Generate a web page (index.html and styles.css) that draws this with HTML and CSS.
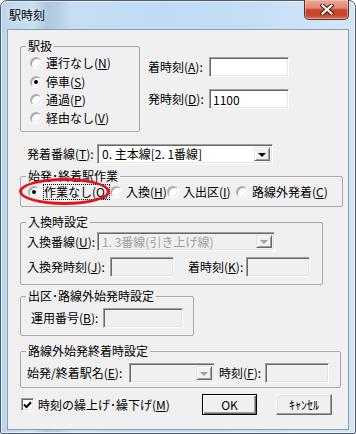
FILE: index.html
```html
<!DOCTYPE html>
<html lang="ja">
<head>
<meta charset="utf-8">
<title>駅時刻</title>
<link rel="stylesheet" href="styles.css">
</head>
<body>
<div class="window">
  <div class="titlebar">
    <span class="title">駅時刻</span>
    <div class="close">
      <svg width="14" height="11" viewBox="0 0 14 11"><path d="M2.5 1.5 L11.5 9.5 M11.5 1.5 L2.5 9.5" stroke="#3b1a14" stroke-width="4.2" stroke-linecap="square"/><path d="M2.5 1.5 L11.5 9.5 M11.5 1.5 L2.5 9.5" stroke="#fff" stroke-width="2.2" stroke-linecap="square"/></svg>
    </div>
  </div>
  <div class="client">
    <div class="top">
      <fieldset class="grp g-eki">
        <legend>駅扱</legend>
        <div class="radio r1"><span class="rb"></span>運行なし(<u>N</u>)</div>
        <div class="radio r2"><span class="rb on"></span>停車(<u>S</u>)</div>
        <div class="radio r3"><span class="rb"></span>通過(<u>P</u>)</div>
        <div class="radio r4"><span class="rb"></span>経由なし(<u>V</u>)</div>
      </fieldset>
      <div class="times">
        <span class="lbl">着時刻(<u>A</u>):</span><span class="edit"></span>
        <span class="lbl">発時刻(<u>D</u>):</span><span class="edit">1100</span>
      </div>
    </div>

    <div class="row r-track">
      <span class="lbl w70">発着番線(<u>T</u>):</span>
      <span class="combo c-track"><span class="ctext">0. 主本線[2. 1番線]</span><span class="drop"><span class="tri"></span></span></span>
    </div>

    <fieldset class="grp g-work">
      <legend>始発･終着駅作業</legend>
      <div class="work-row">
        <div class="radio"><span class="rb on"></span><span class="focus">作業なし(<u>O</u>)</span></div>
        <div class="radio"><span class="rb"></span>入換(<u>H</u>)</div>
        <div class="radio"><span class="rb"></span>入出区(<u>I</u>)</div>
        <div class="radio"><span class="rb"></span>路線外発着(<u>C</u>)</div>
      </div>
    </fieldset>

    <fieldset class="grp g-shunt">
      <legend>入換時設定</legend>
      <div class="row s-row1">
        <span class="lbl w70">入換番線(<u>U</u>):</span>
        <span class="combo dis c-shunt"><span class="ctext">1. 3番線(引き上げ線)</span><span class="drop"><span class="tri"></span></span></span>
      </div>
      <div class="row s-row2">
        <span class="lbl w83">入換発時刻(<u>J</u>):</span>
        <span class="edit dis w64"></span>
        <span class="lbl w58 gap14">着時刻(<u>K</u>):</span>
        <span class="edit dis w64"></span>
      </div>
    </fieldset>

    <fieldset class="grp g-out">
      <legend>出区･路線外始発時設定</legend>
      <div class="row o-row">
        <span class="lbl w72">運用番号(<u>B</u>):</span>
        <span class="edit dis w80"></span>
      </div>
    </fieldset>

    <fieldset class="grp g-ext">
      <legend>路線外始発終着時設定</legend>
      <div class="row e-row">
        <span class="lbl w102">始発/終着駅名(<u>E</u>):</span>
        <span class="combo dis c-ext"><span class="ctext"></span><span class="drop"><span class="tri"></span></span></span>
        <span class="lbl w46 gap4">時刻(<u>F</u>):</span>
        <span class="edit dis w64"></span>
      </div>
    </fieldset>

    <div class="bottom">
      <span class="chk"><svg width="9" height="8" viewBox="0 0 9 8"><path d="M1 3.5 L3.5 6 L8 1.2" stroke="#000" stroke-width="2" fill="none"/></svg></span>
      <span class="chk-lbl">時刻の繰上げ･繰下げ(<u>M</u>)</span>
      <span class="btn default">OK</span>
      <span class="btn cancel">ｷｬﾝｾﾙ</span>
    </div>

    <span class="ellipse"></span>
  </div>
</div>
</body>
</html>
```

FILE: styles.css
```css
* { box-sizing: border-box; }
html, body { margin: 0; padding: 0; }
body {
  width: 356px;
  height: 434px;
  overflow: hidden;
  background: #ffffff;
  font: 12px/14px "Noto Sans CJK JP", "Noto Sans", sans-serif;
  color: #000;
}
u { text-decoration: underline; text-underline-offset: 1px; }

.window {
  width: 356px;
  height: 434px;
  border: 1px solid #4b5f74;
  border-radius: 7px 7px 2px 2px;
  background: linear-gradient(90deg, #bcd5ec 0, #c8dff4 9%, #aec6de 13%, #b5cde5 16%, #c7def5 20%, #bfdbf6 45%, #c5def6 70%, #d3e6f8 100%);
  box-shadow: inset 0 0 0 1px rgba(255, 255, 255, 0.55);
  display: flex;
  flex-direction: column;
}

.titlebar {
  height: 28px;
  display: flex;
  align-items: flex-start;
  padding-left: 8px;
}
.title {
  margin-top: 7px;
  font-size: 12px;
  line-height: 14px;
  color: #000;
  text-shadow: 0 0 6px rgba(255, 255, 255, 0.9);
}
.close {
  margin-left: auto;
  margin-right: 6px;
  margin-top: -1px;
  width: 45px;
  height: 20px;
  border: 1px solid #6a2b1f;
  border-top: none;
  border-radius: 0 0 5px 5px;
  background: linear-gradient(180deg, #eaa898 0%, #de8670 42%, #c8462b 52%, #c5452b 78%, #d8715a 100%);
  box-shadow: inset 0 0 0 1px rgba(255, 220, 210, 0.45);
  display: flex;
  align-items: center;
  justify-content: center;
}

.client {
  margin: 0 6px;
  height: 401px;
  border: 1px solid #8e9dac;
  background: #f0f0f0;
  position: relative;
  display: flex;
  flex-direction: column;
  align-items: flex-start;
}

/* group boxes */
.grp {
  margin: 0 0 0 12px;
  padding: 0;
  border: 1px solid #a8a8a8;
  border-radius: 2px;
  min-width: 0;
}
.grp legend {
  margin-left: 5px;
  padding: 0 2px;
  line-height: 14px;
  height: 14px;
}

.top { display: flex; height: 102px; }
.g-eki {
  margin-top: 9px;
  width: 120px;
  height: 93px;
  padding-top: 1px;
}
.g-eki .radio { margin-left: 9px; }
.radio {
  display: flex;
  align-items: center;
  height: 18px;
  white-space: nowrap;
}
.g-eki .r2 { margin-top: 1px; }

.rb {
  width: 12px;
  height: 12px;
  border-radius: 50%;
  border: 1px solid;
  border-color: #b4b4b4 #ffffff #ffffff #b4b4b4;
  background: #fff;
  box-shadow: inset 1px 1px 0 #9a9a9a, inset -1px -1px 0 #e8e8e8;
  margin-right: 4px;
  flex: none;
  display: flex;
  align-items: center;
  justify-content: center;
}
.rb.on::after {
  content: "";
  width: 4px;
  height: 4px;
  border-radius: 50%;
  background: #000;
}

.times {
  margin: 27px 0 0 8px;
  display: grid;
  grid-template-columns: 61px 80px;
  grid-auto-rows: 20px;
  row-gap: 12px;
  align-items: center;
  align-content: start;
}
.lbl { white-space: nowrap; flex: none; }

.edit {
  display: block;
  height: 20px;
  background: #fff;
  border: 1px solid;
  border-color: #a0a0a0 #ffffff #ffffff #a0a0a0;
  box-shadow: inset 1px 1px 0 #696969, inset -1px -1px 0 #e3e3e3;
  padding: 3px 0 0 3px;
  line-height: 14px;
  flex: none;
}
.edit.dis { background: #f0f0f0; }

.row { display: flex; align-items: center; height: 20px; }
.r-track { margin-top: 12px; padding-left: 19px; }
.w70 { width: 70px; }
.w83 { width: 83px; }
.w58 { width: 58px; }
.w72 { width: 72px; }
.w102 { width: 102px; }
.w46 { width: 46px; }
.w64 { width: 64px; }
.w80 { width: 80px; }
.gap14 { margin-left: 14px; }
.gap4 { margin-left: 4px; }

.combo {
  display: flex;
  align-items: stretch;
  height: 20px;
  background: #fff;
  border: 1px solid;
  border-color: #a0a0a0 #ffffff #ffffff #a0a0a0;
  box-shadow: inset 1px 1px 0 #696969, inset -1px -1px 0 #e3e3e3;
  padding: 2px;
  flex: none;
}
.combo.dis { background: #f0f0f0; color: #a0a0a0; }
.ctext { flex: 1; min-width: 0; padding-left: 2px; line-height: 14px; white-space: nowrap; }
.drop {
  width: 16px;
  flex: none;
  background: #f0f0f0;
  border: 1px solid;
  border-color: #e3e3e3 #696969 #696969 #e3e3e3;
  box-shadow: inset 1px 1px 0 #fff, inset -1px -1px 0 #a0a0a0;
  display: flex;
  align-items: center;
  justify-content: center;
}
.tri {
  width: 0;
  height: 0;
  border-left: 4px solid transparent;
  border-right: 4px solid transparent;
  border-top: 4px solid #000;
  margin-top: 1px;
}
.combo.dis .tri { border-top-color: #a0a0a0; }
.c-track { width: 176px; }
.c-shunt { width: 178px; height: 19px; }
.c-shunt .ctext { line-height: 13px; }
.c-ext { width: 86px; }

.g-work {
  margin-top: 5px;
  width: 323px;
  padding: 0 0 5px 0;
}
.work-row {
  display: grid;
  grid-template-columns: 82px 57px 69px auto;
  height: 18px;
  padding-left: 7px;
}
.focus { outline: 1px dotted #000; outline-offset: 0; }

.g-shunt {
  margin-top: 8px;
  width: 303px;
  padding: 3px 0 7px 0;
}
.g-shunt .row { padding-left: 6px; }
.s-row1 { height: 19px; }
.s-row2 { margin-top: 6px; }

.g-out {
  margin-top: 4px;
  width: 174px;
  padding: 5px 0 7px 0;
}
.o-row { padding-left: 10px; }

.g-ext {
  margin-top: 8px;
  width: 321px;
  padding: 5px 0 4px 0;
}
.e-row { padding-left: 6px; }

.bottom {
  margin-top: 6px;
  height: 21px;
  width: 100%;
  display: flex;
  align-items: center;
  padding: 0 16px 0 13px;
}
.chk {
  width: 13px;
  height: 13px;
  background: #fff;
  border: 1px solid;
  border-color: #a0a0a0 #ffffff #ffffff #a0a0a0;
  box-shadow: inset 1px 1px 0 #696969, inset -1px -1px 0 #e3e3e3;
  display: flex;
  align-items: center;
  justify-content: center;
  flex: none;
}
.chk-lbl { margin-left: 4px; white-space: nowrap; }
.btn {
  width: 55px;
  height: 21px;
  display: flex;
  align-items: center;
  justify-content: center;
  background: #f0f0f0;
  border: 1px solid;
  border-color: #ffffff #696969 #696969 #ffffff;
  box-shadow: inset -1px -1px 0 #a0a0a0, inset 1px 1px 0 #e3e3e3;
  flex: none;
}
.btn.default {
  margin-left: auto;
  border: 1px solid #000;
  box-shadow: inset 1px 1px 0 #fff, inset -1px -1px 0 #696969, inset -2px -2px 0 #a0a0a0;
}
.btn.cancel { margin-left: 19px; width: 56px; }

.ellipse {
  position: absolute;
  left: 11px;
  top: 148px;
  width: 91px;
  height: 27px;
  border: 3px solid #e3131b;
  border-radius: 50%;
  pointer-events: none;
}
```
